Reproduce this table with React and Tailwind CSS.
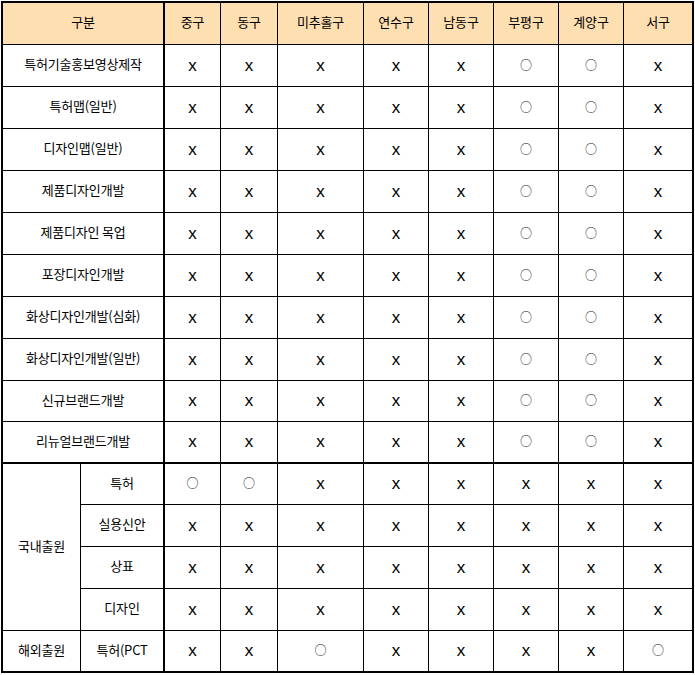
import React from "react";

const cols = ["중구", "동구", "미추홀구", "연수구", "남동구", "부평구", "계양구", "서구"];
const O = "○";
const X = "x";

const topRows = [
  "특허기술홍보영상제작",
  "특허맵(일반)",
  "디자인맵(일반)",
  "제품디자인개발",
  "제품디자인 목업",
  "포장디자인개발",
  "화상디자인개발(심화)",
  "화상디자인개발(일반)",
  "신규브랜드개발",
  "리뉴얼브랜드개발",
];
const topVals = [X, X, X, X, X, O, O, X];

const domestic = [
  { label: "특허", vals: [O, O, X, X, X, X, X, X] },
  { label: "실용신안", vals: [X, X, X, X, X, X, X, X] },
  { label: "상표", vals: [X, X, X, X, X, X, X, X] },
  { label: "디자인", vals: [X, X, X, X, X, X, X, X] },
];
const foreign = { label: "특허(PCT", vals: [X, X, O, X, X, X, X, O] };

function Val({ v, last, bottom }) {
  return (
    <div
      className={`flex items-center justify-center border-black ${last ? "" : "border-r"} ${bottom}`}
    >
      {v === X ? (
        <span className="text-[17px] leading-none text-black font-['Liberation_Sans',sans-serif] -mt-[1px]">x</span>
      ) : (
        <span className="text-[12px] leading-none text-[#222] -mt-[2px]">○</span>
      )}
    </div>
  );
}

export default function App() {
  return (
    <div className="bg-white w-[695px] h-[675px] pt-[1px] pl-[1px]">
      <div className="w-[693px] border-2 border-black bg-white text-[13px] tracking-[-0.2px] text-black font-['Noto_Sans_CJK_KR','Noto_Sans',sans-serif]">
        <div className="grid grid-cols-[78px_84px_56px_57px_86px_65px_65px_65px_65px_68px] grid-rows-[42px_42px_42px_42px_42px_42px_42px_42px_42px_41px_42px_41px_42px_42px_42px_40px]">
          {/* header */}
          <div className="col-span-2 flex items-center justify-center pb-[3px] bg-[#fedfb2] border-r-2 border-b border-black">구분</div>
          {cols.map((c, i) => (
            <div
              key={c}
              className={`flex items-center justify-center pb-[3px] bg-[#fedfb2] border-b border-black ${i === cols.length - 1 ? "" : "border-r"}`}
            >
              {c}
            </div>
          ))}

          {/* top rows */}
          {topRows.map((label, r) => {
            const bottom = r === topRows.length - 1 ? "border-b-2" : "border-b";
            return (
              <React.Fragment key={label}>
                <div className={`col-span-2 flex items-center justify-center pb-[3px] border-r-2 border-black ${bottom}`}>
                  {label}
                </div>
                {topVals.map((v, i) => (
                  <Val key={i} v={v} last={i === topVals.length - 1} bottom={bottom} />
                ))}
              </React.Fragment>
            );
          })}

          {/* domestic */}
          <div className="row-span-4 flex items-center justify-center pb-[3px] border-r border-b border-black">국내출원</div>
          {domestic.map((row) => (
            <React.Fragment key={row.label}>
              <div className="flex items-center justify-center pb-[3px] border-r-2 border-b border-black">{row.label}</div>
              {row.vals.map((v, i) => (
                <Val key={i} v={v} last={i === row.vals.length - 1} bottom="border-b" />
              ))}
            </React.Fragment>
          ))}

          {/* foreign */}
          <div className="flex items-center justify-center pb-[3px] border-r border-black">해외출원</div>
          <div className="flex items-center justify-center pb-[3px] border-r-2 border-black">{foreign.label}</div>
          {foreign.vals.map((v, i) => (
            <Val key={i} v={v} last={i === foreign.vals.length - 1} bottom="" />
          ))}
        </div>
      </div>
    </div>
  );
}
